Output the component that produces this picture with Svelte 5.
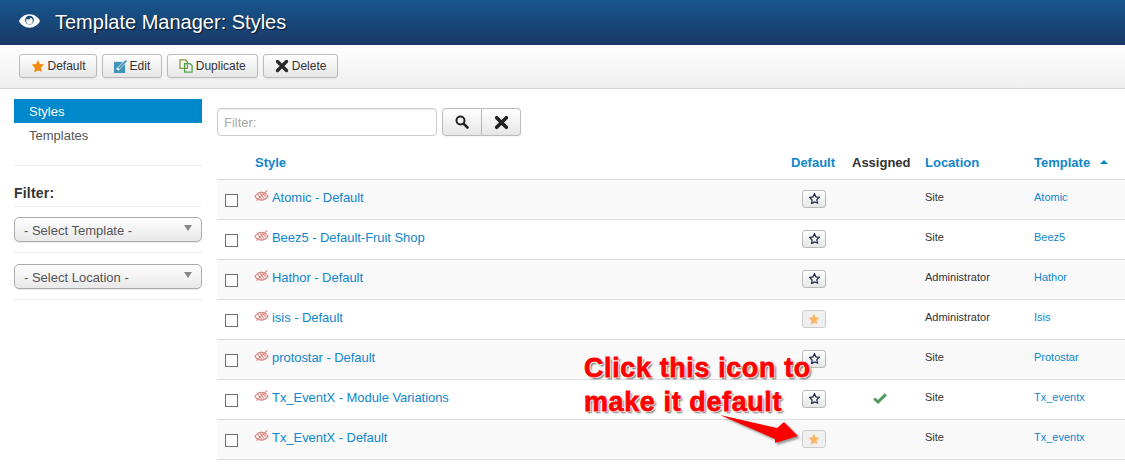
<script>
	const actions = [
		{ label: 'Default', icon: 'star' },
		{ label: 'Edit', icon: 'edit' },
		{ label: 'Duplicate', icon: 'copy' },
		{ label: 'Delete', icon: 'cross' }
	];
	const styles = [
		{ name: 'Atomic - Default', location: 'Site', template: 'Atomic' },
		{ name: 'Beez5 - Default-Fruit Shop', location: 'Site', template: 'Beez5' },
		{ name: 'Hathor - Default', location: 'Administrator', template: 'Hathor' },
		{ name: 'isis - Default', location: 'Administrator', template: 'Isis', home: true },
		{ name: 'protostar - Default', location: 'Site', template: 'Protostar' },
		{ name: 'Tx_EventX - Module Variations', location: 'Site', template: 'Tx_eventx', assigned: true },
		{ name: 'Tx_EventX - Default', location: 'Site', template: 'Tx_eventx', home: true }
	];
	const starPath = 'M8 1l2.100 4.600 5 .6-3.700 3.400 1 4.900L8 13.100l-4.400 2.400 1-4.900L.9 6.200l5-.6z';
</script>

<div class="page">
	<header class="title-bar">
		<svg class="eye" viewBox="0 0 22 14" width="21" height="14">
			<path fill="#fff" d="M11 0C6 0 2 3 0 7c2 4 6 7 11 7s9-3 11-7c-2-4-6-7-11-7z" />
			<circle cx="11" cy="6" r="4.600" fill="#17456f" />
			<circle cx="11" cy="7" r="3.400" fill="#fff" />
			<circle cx="10" cy="4" r="1.500" fill="#17456f" />
		</svg>
		<h1>Template Manager: Styles</h1>
	</header>

	<div class="toolbar">
		{#each actions as action}
			<button class="btn" class:wide={action.icon === 'copy' || action.icon === 'cross'}>
				{#if action.icon === 'star'}
					<svg viewBox="0 0 16 16" width="14" height="14"><path fill="#f48a0c" d={starPath} /></svg>
				{:else if action.icon === 'edit'}
					<svg viewBox="0 0 14 14" width="13" height="13">
						<path fill="#3f94b8" d="M0 2h12v12H0z" />
						<path stroke="#f4f4f4" stroke-width="3.200" d="M3.500 10.500L11.500 2.500" />
						<path stroke="#3f94b8" stroke-width="2" d="M5 9L13.300 .7" />
					</svg>
				{:else if action.icon === 'copy'}
					<svg viewBox="0 0 15 15" width="14" height="14" fill="none" stroke-width="1.400">
						<path stroke="#8a9a3c" d="M1 1h6l2 2v7H1z" />
						<path stroke="#4aa84a" d="M6 5h6l2 2v7H6z" />
					</svg>
				{:else}
					<svg viewBox="0 0 14 14" width="14" height="14"><path stroke="#2a2a2a" stroke-width="3.400" stroke-linecap="round" d="M2.500 2.500l9 9M11.500 2.500l-9 9" /></svg>
				{/if}
				<span>{action.label}</span>
			</button>
		{/each}
	</div>

	<div class="content">
		<aside class="sidebar">
			<nav>
				<div class="nav-item active">Styles</div>
				<div class="nav-item">Templates</div>
			</nav>
			<hr class="rule first" />
			<h4>Filter:</h4>
			<div class="select-row">
				<div class="select"><span>- Select Template -</span><i></i></div>
			</div>
			<div class="select-row second">
				<div class="select"><span>- Select Location -</span><i></i></div>
			</div>
		</aside>

		<main class="main">
			<div class="search">
				<div class="search-input">Filter:</div>
				<div class="btn-group">
					<button class="btn icon-btn" aria-label="Search">
						<svg viewBox="0 0 14 14" width="14" height="14" fill="none" stroke="#222"><circle cx="5.500" cy="5.500" r="4" stroke-width="2" /><path stroke-width="2.600" stroke-linecap="round" d="M8.800 8.800l3.700 3.700" /></svg>
					</button>
					<button class="btn icon-btn" aria-label="Clear">
						<svg viewBox="0 0 14 14" width="15" height="15"><path stroke="#222" stroke-width="3.400" stroke-linecap="round" d="M2.500 2.500l9 9M11.500 2.500l-9 9" /></svg>
					</button>
				</div>
			</div>

			<table>
				<thead>
					<tr>
						<th class="c-check"></th>
						<th class="c-name"><span class="sort">Style</span></th>
						<th class="c-default"><span class="sort">Default</span></th>
						<th class="c-assigned">Assigned</th>
						<th class="c-location"><span class="sort">Location</span></th>
						<th class="c-template"><span class="sort">Template</span><b class="caret"></b></th>
					</tr>
				</thead>
				<tbody>
					{#each styles as row}
						<tr>
							<td class="c-check"><span class="checkbox"></span></td>
							<td class="c-name">
								<div class="name">
									<svg class="hidden-eye" viewBox="0 0 16 13" width="15" height="13" fill="none" stroke="#dc8f88">
										<path stroke-width="1.300" d="M1 7.500c2-3 4-4.300 7-4.300s5 1.300 7 4.300c-2 2.800-4 4-7 4s-5-1.200-7-4z" />
										<path stroke-width="1.200" d="M4 5l4.500 6M6.500 4l4.500 6.500M9 3.500l4 5M2.500 12L14 1" />
									</svg>
									<span>{row.name}</span>
								</div>
							</td>
							<td class="c-default">
								<span class="star-btn" class:home={row.home}>
									{#if row.home}
										<svg viewBox="0 0 16 16" width="12" height="12"><path fill="#fbb45f" d={starPath} /></svg>
									{:else}
										<svg viewBox="0 0 16 16" width="11" height="11"><path fill="none" stroke="#1f2f4f" stroke-width="1.800" d={starPath} /></svg>
									{/if}
								</span>
							</td>
							<td class="c-assigned">
								{#if row.assigned}
									<svg class="check" viewBox="0 0 14 11" width="14" height="11"><path fill="none" stroke="#4f9a5c" stroke-width="3" d="M1.200 5.500l3.800 3.500 7.800-7.600" /></svg>
								{/if}
							</td>
							<td class="c-location"><span class="cell-text">{row.location}</span></td>
							<td class="c-template"><span class="cell-text">{row.template}</span></td>
						</tr>
					{/each}
				</tbody>
			</table>
		</main>
	</div>

	<div class="callout">Click this icon to<br />make it default</div>
	<svg class="arrow" viewBox="0 0 90 40" width="90" height="40">
		<path fill="#f00" d="M1 2L58 15 65 9 79 23 56 30 56 26z" />
	</svg>
</div>

<style>
	:global(body) {
		margin: 0;
		background: #fff;
	}

	.page {
		position: relative;
		width: 1125px;
		height: 467px;
		overflow: hidden;
		font-family: "Liberation Sans", Arial, sans-serif;
		font-size: 12px;
		color: #333;
	}

	.title-bar {
		display: flex;
		align-items: center;
		gap: 15px;
		height: 45px;
		padding-left: 19px;
		box-sizing: border-box;
		background: linear-gradient(#17568c, #1a3867);
	}

	.eye {
		flex: none;
		margin-bottom: 3px;
	}

	h1 {
		margin: 0;
		font-size: 20px;
		font-weight: 400;
		color: #fff;
		text-shadow: 1px 1px 1px rgba(0, 0, 0, 0.7);
	}

	.toolbar {
		display: flex;
		gap: 5px;
		height: 44px;
		padding: 9px 19px 0;
		box-sizing: border-box;
		background: linear-gradient(#fff, #efefef);
		border-bottom: 1px solid #d4d4d4;
	}

	.btn {
		display: inline-flex;
		align-items: center;
		gap: 3px;
		height: 24px;
		padding: 0 10.500px;
		box-sizing: border-box;
		font: inherit;
		color: #333;
		background: linear-gradient(#fff, #e6e6e6);
		border: 1px solid #bbb;
		border-radius: 3px;
		box-shadow: 0 1px 2px rgba(0, 0, 0, 0.05);
	}

	.btn.wide {
		padding: 0 11px;
	}

	.content {
		display: flex;
		gap: 15px;
		padding: 10px 0 0 14px;
	}

	.sidebar {
		flex: none;
		width: 188px;
	}

	.nav-item {
		height: 24px;
		padding: 1px 0 0 15px;
		box-sizing: border-box;
		line-height: 24px;
		font-size: 13px;
		color: #555;
	}

	.nav-item.active {
		color: #fff;
		background: #0088cc;
	}

	.rule {
		margin: 0;
		border: 0;
		border-top: 1px solid #eee;
	}

	.rule.first {
		margin-top: 18px;
	}

	h4 {
		margin: 0;
		padding: 19px 0 4px;
		font-size: 14px;
		line-height: 17px;
		letter-spacing: 0.2px;
		color: #333;
		border-bottom: 1px solid #eee;
	}

	.select-row {
		height: 46px;
		padding-top: 10px;
		box-sizing: border-box;
		border-bottom: 1px solid #eee;
	}

	.select-row.second {
		height: 47px;
		padding-top: 11px;
	}

	.select {
		display: flex;
		align-items: center;
		justify-content: space-between;
		height: 25px;
		padding: 1px 9px 0;
		box-sizing: border-box;
		font-size: 13px;
		color: #555;
		background: linear-gradient(#fff, #e8e8e8);
		border: 1px solid #aaa;
		border-radius: 5px;
		box-shadow: 0 1px 1px rgba(0, 0, 0, 0.08);
	}

	.select i {
		width: 0;
		height: 0;
		margin-top: -4px;
		border: 4px solid transparent;
		border-top: 6px solid #888;
		border-bottom: 0;
	}

	.main {
		flex: 1;
		min-width: 0;
		padding-top: 9px;
	}

	.search {
		display: flex;
		gap: 5px;
		height: 36px;
	}

	.search-input {
		width: 220px;
		height: 28px;
		padding-left: 6px;
		line-height: 27px;
		box-sizing: border-box;
		font-size: 13px;
		color: #aaa;
		background: #fff;
		border: 1px solid #ccc;
		border-radius: 4px;
		box-shadow: inset 0 1px 1px rgba(0, 0, 0, 0.075);
	}

	.btn-group {
		display: flex;
	}

	.icon-btn {
		justify-content: center;
		width: 40px;
		height: 28px;
		padding: 0;
		border-radius: 4px 0 0 4px;
	}

	.icon-btn + .icon-btn {
		width: 39px;
		border-left: 0;
		border-radius: 0 4px 4px 0;
	}

	table {
		width: 908px;
		border-collapse: collapse;
		table-layout: fixed;
	}

	thead tr {
		height: 35px;
	}

	th {
		padding: 2px 0 0;
		text-align: left;
		font-size: 13px;
		font-weight: 700;
		color: #333;
		border-bottom: 1px solid #ddd;
	}

	.sort {
		color: #1086cc;
	}

	tbody tr {
		height: 40px;
	}

	tbody tr:nth-child(odd) {
		background: #f9f9f9;
	}

	td {
		padding: 0;
		border-bottom: 1px solid #ddd;
		font-size: 11px;
		color: #333;
	}

	.c-check {
		width: 38px;
		padding-left: 8px;
		box-sizing: border-box;
	}

	.c-name {
		width: 536px;
	}

	th.c-default {
		width: 61px;
	}

	td.c-default {
		padding-left: 11px;
	}

	.c-assigned {
		width: 73px;
	}

	.c-location {
		width: 109px;
	}

	td.c-assigned {
		padding-left: 21px;
	}

	td.c-template {
		color: #1086cc;
	}

	.cell-text {
		position: relative;
		top: -2px;
	}

	.checkbox {
		display: block;
		width: 13px;
		height: 13px;
		margin-top: 2px;
		box-sizing: border-box;
		background: #fff;
		border: 1px solid #707070;
	}

	.name {
		display: flex;
		align-items: center;
		gap: 3px;
		margin: -4px 0 0 -1px;
		font-size: 13px;
		letter-spacing: -0.05px;
		color: #1086cc;
	}

	.hidden-eye {
		flex: none;
		margin-top: -4px;
	}

	.star-btn {
		display: flex;
		align-items: center;
		justify-content: center;
		width: 24px;
		height: 18px;
		margin-top: -1px;
		box-sizing: border-box;
		background: linear-gradient(#fff, #e6e6e6);
		border: 1px solid #bbb;
		border-radius: 3px;
	}

	.star-btn.home {
		background: #f0f0f0;
		border-color: #ccc;
	}

	.check {
		display: block;
		margin-top: -2px;
	}

	.caret {
		display: inline-block;
		margin: 0 0 2px 10px;
		vertical-align: middle;
		border: 4px solid transparent;
		border-bottom: 4px solid #0088cc;
		border-top: 0;
	}

	.callout {
		position: absolute;
		left: 584px;
		top: 351px;
		font-size: 27px;
		font-weight: 700;
		line-height: 34px;
		letter-spacing: 0.6px;
		color: #f00;
		-webkit-text-stroke: 0.8px #f00;
		text-shadow: -1px -1px 0 #fff, 1px -1px 0 #fff, -1px 1px 0 #fff, 1px 1px 0 #fff, 2px 2px 2px rgba(0, 0, 0, 0.6);
		white-space: nowrap;
	}

	.arrow {
		position: absolute;
		left: 719px;
		top: 413px;
		filter: drop-shadow(2px 2px 1px rgba(0, 0, 0, 0.4));
	}
</style>
